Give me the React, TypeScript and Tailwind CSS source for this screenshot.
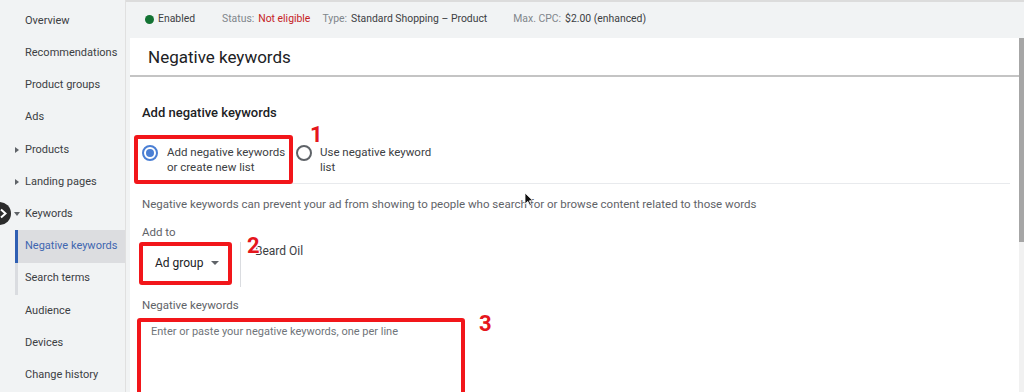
import React from "react";

const navItems = [
  { label: "Overview" },
  { label: "Recommendations" },
  { label: "Product groups" },
  { label: "Ads" },
  { label: "Products", caret: "right" },
  { label: "Landing pages", caret: "right" },
  { label: "Keywords", caret: "down" },
  { label: "Negative keywords", active: true },
  { label: "Search terms", sub: true },
  { label: "Audience" },
  { label: "Devices" },
  { label: "Change history" },
];

const Marker = ({ n, className }: { n: string; className: string }) => (
  <span
    className={`absolute text-[22px] font-bold leading-none text-[#e5161c] ${className}`}
    style={{ textShadow: "1px 1px 0 #fff, -1px -1px 0 #fff, 1px -1px 0 #fff, -1px 1px 0 #fff" }}
  >
    {n}
  </span>
);

const Sidebar = () => (
  <aside className="relative w-[126px] shrink-0 border-r border-[#e0e0e0] bg-[#f1f3f4] pt-[5px]">
    {navItems.map((item) => (
      <div
        key={item.label}
        className={`relative flex h-[32.2px] items-center text-[11px] ${
          item.active
            ? "ml-[15px] border-l-[3px] border-[#2f5fb3] bg-[#dcdde0] pl-[7px] text-[#3f66b0]"
            : item.sub
            ? "ml-[15px] border-l-[3px] border-[#dadce0] pl-[7px] text-[#3c4043]"
            : "pl-[25px] text-[#3c4043]"
        }`}
      >
        {item.caret === "right" && (
          <span className="absolute left-[15px] h-0 w-0 border-y-[3px] border-l-[4px] border-y-transparent border-l-[#5f6368]" />
        )}
        {item.caret === "down" && (
          <span className="absolute left-[14px] h-0 w-0 border-x-[3px] border-t-[4px] border-x-transparent border-t-[#5f6368]" />
        )}
        {item.label}
      </div>
    ))}
    <div className="absolute left-[-12px] top-[202px] flex h-[23px] w-[23px] items-center justify-end rounded-full bg-[#2b2b2b] pr-[3px]">
      <svg width="9" height="11" viewBox="0 0 9 11" fill="none">
        <path d="M2 1.5 L6.5 5.5 L2 9.5" stroke="#fff" strokeWidth="2" />
      </svg>
    </div>
  </aside>
);

const Radio = ({ checked }: { checked?: boolean }) => (
  <span
    className={`flex h-[16px] w-[16px] shrink-0 items-center justify-center rounded-full border-2 ${
      checked ? "border-[#4a7fd4]" : "border-[#5f6368]"
    }`}
  >
    {checked && <span className="h-[8px] w-[8px] rounded-full bg-[#4a7fd4]" />}
  </span>
);

export default function App() {
  return (
    <div
      className="flex h-[392px] w-[1024px] overflow-hidden bg-[#f1f3f4] text-[#202124]"
      style={{ fontFamily: "Roboto, 'Liberation Sans', sans-serif" }}
    >
      <Sidebar />
      <main className="flex min-w-0 flex-1 flex-col">
        <div className="flex h-[38px] shrink-0 items-center border-t-[2px] border-[#dcdcdc] pb-[2px] pl-[19px] text-[10.4px]">
          <span className="mr-[4px] h-[9px] w-[9px] rounded-full bg-[#137333]" />
          <span className="text-[#3c4043]">Enabled</span>
          <span className="ml-[27px] text-[#80868b]">Status:</span>
          <span className="ml-[4px] text-[#c5221f]">Not eligible</span>
          <span className="ml-[12px] text-[#80868b]">Type:</span>
          <span className="ml-[4px] text-[#3c4043]">Standard Shopping – Product</span>
          <span className="ml-[26px] text-[#80868b]">Max. CPC:</span>
          <span className="ml-[4px] text-[#3c4043]">$2.00 (enhanced)</span>
        </div>
        <div className="flex min-h-0 flex-1">
          <div className="ml-[4px] flex min-w-0 flex-1 flex-col bg-white">
            <div className="flex h-[39px] shrink-0 items-center border-b-2 border-[#c4c4c4] pl-[18px] pt-[2px] text-[17px] text-[#202124]">
              Negative keywords
            </div>
            <div className="relative pl-[12px] pr-[9px]">
              <div className="pt-[26px] text-[13px] font-medium text-[#202124]">Add negative keywords</div>
              <div className="mt-[12px] flex items-start border-b border-[#e8eaed]">
                <div className="relative z-10 -mb-px -ml-[8px] flex h-[49px] w-[159px] items-start gap-[9px] rounded-[3px] border-4 border-[#f2161a] pl-[4px] pt-[6px]">
                  <Radio checked />
                  <span className="text-[11.5px] leading-[15px] text-[#3c4043]">
                    Add negative keywords
                    <br />
                    or create new list
                  </span>
                  <Marker n="1" className="left-[172px] top-[-15px]" />
                </div>
                <div className="ml-[3px] flex items-start gap-[8px] pt-[10px]">
                  <Radio />
                  <span className="text-[11.5px] leading-[15px] text-[#3c4043]">
                    Use negative keyword
                    <br />
                    list
                  </span>
                </div>
              </div>
              <div className="pt-[12px] text-[11.5px] leading-[17px] text-[#5f6368]">
                Negative keywords can prevent your ad from showing to people who search for or browse content related to those words
              </div>
              <div className="pt-[12px] text-[11.5px] leading-[14px] text-[#5f6368]">Add to</div>
              <div className="mt-[3px] flex items-start">
                <div className="relative -ml-[3px] flex h-[43px] w-[93px] items-center rounded-[3px] border-4 border-[#f2161a] pl-[12px] text-[12px] text-[#202124]">
                  Ad group
                  <span className="ml-[8px] h-0 w-0 border-x-[4px] border-t-[4px] border-x-transparent border-t-[#5f6368]" />
                  <Marker n="2" className="left-[104px] top-[-11px]" />
                </div>
                <div className="ml-[8px] h-[45px] border-l border-[#dadce0]" />
                <span className="ml-[14px] text-[12px] leading-[18px] text-[#3c4043]">Beard Oil</span>
              </div>
              <div className="pt-[11px] text-[11.5px] leading-[14px] text-[#5f6368]">Negative keywords</div>
              <div className="relative -ml-[5px] mt-[6px] h-[90px] w-[328px] rounded-[3px] border-4 border-[#f2161a] pl-[10px] pt-[2px] text-[11px] text-[#70757a]">
                Enter or paste your negative keywords, one per line
                <Marker n="3" className="left-[338px] top-[-9px]" />
              </div>
              <svg className="absolute left-[394px] top-[115px]" width="10" height="15" viewBox="0 0 10 15">
                <path d="M1 1 L1 12 L3.8 9.4 L5.8 13.6 L7.4 12.9 L5.4 8.8 L9 8.8 Z" fill="#111" stroke="#fff" strokeWidth="0.8" />
              </svg>
            </div>
          </div>
          <div className="w-[5px] shrink-0 bg-[#f1f1f1]">
            <div className="h-[204px] bg-[#a6a6a6]" />
          </div>
        </div>
      </main>
    </div>
  );
}
